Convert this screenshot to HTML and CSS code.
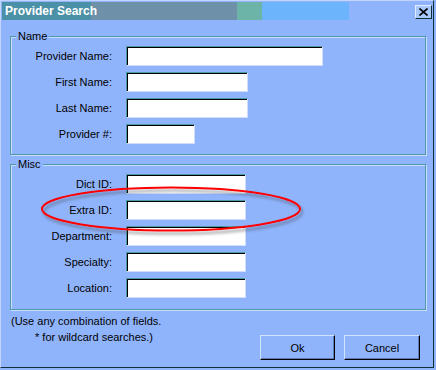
FILE: index.html
```html
<!DOCTYPE html>
<html lang="en">
<head>
    <meta charset="UTF-8">
    <title>Provider Search</title>
    <link rel="stylesheet" href="styles.css">
</head>
<body>
    <div class="dialog">
        <div class="titlebar">
            <div class="title-band">
                <span class="title-text">Provider Search</span>
                <span class="seg seg-gray"></span>
                <span class="seg seg-green"></span>
                <span class="seg seg-blue"></span>
            </div>
            <button type="button" class="close-btn">
                <svg width="9" height="8" viewBox="0 0 9 8">
                    <path d="M0.5 0.5 L8.5 7.5 M8.5 0.5 L0.5 7.5" stroke="#000" stroke-width="1.6" fill="none"/>
                </svg>
            </button>
        </div>
        <div class="content">
            <div class="group group-name">
                <span class="legend">Name</span>
                <div class="form-grid">
                    <label>Provider Name:</label>
                    <input type="text" class="field w-wide">
                    <label>First Name:</label>
                    <input type="text" class="field w-mid">
                    <label>Last Name:</label>
                    <input type="text" class="field w-mid">
                    <label>Provider #:</label>
                    <input type="text" class="field w-short">
                </div>
            </div>
            <div class="group group-misc">
                <span class="legend">Misc</span>
                <div class="form-grid">
                    <label>Dict ID:</label>
                    <input type="text" class="field w-misc">
                    <label>Extra ID:</label>
                    <input type="text" class="field w-misc">
                    <label>Department:</label>
                    <input type="text" class="field w-misc">
                    <label>Specialty:</label>
                    <input type="text" class="field w-misc">
                    <label>Location:</label>
                    <input type="text" class="field w-misc">
                </div>
            </div>
            <div class="footer">
                <div class="hint">
                    <p>(Use any combination of fields.</p>
                    <p class="indent">* for wildcard searches.)</p>
                </div>
                <div class="buttons">
                    <button type="button" class="btn btn-ok">Ok</button>
                    <button type="button" class="btn btn-cancel">Cancel</button>
                </div>
            </div>
        </div>
        <!-- red marker drawn over the Extra ID row -->
        <svg class="highlight" width="270" height="56" viewBox="0 0 270 56">
            <defs>
                <filter id="shade" x="-10%" y="-30%" width="120%" height="160%">
                    <feDropShadow dx="2" dy="3" stdDeviation="1.6" flood-color="#404850" flood-opacity="0.55"/>
                </filter>
            </defs>
            <ellipse cx="133" cy="25" rx="129" ry="21.5" fill="none" stroke="#ff0000" stroke-width="2" filter="url(#shade)"/>
        </svg>
    </div>
</body>
</html>
```

FILE: styles.css
```css
body {
    margin: 0;
    background: #90b4fc;
    font-family: "Liberation Sans", Arial, sans-serif;
    font-size: 11px;
    color: #000;
}
.dialog {
    position: relative;
    width: 434px;
    height: 368px;
    box-sizing: border-box;
    background: #90b4fc;
    border-top: 1px solid #c4d4fc;
    border-left: 1px solid #c4d4fc;
    border-right: 1px solid #10303c;
    border-bottom: 1px solid #10303c;
}
.titlebar {
    display: flex;
    justify-content: space-between;
    align-items: flex-start;
    height: 20px;
    padding: 1px 1px 0 1px;
}
.title-band {
    display: flex;
    height: 18px;
}
/* the caption runs a little past its own band, so keep it on top */
.title-text {
    position: relative;
    z-index: 1;
    width: 86px;
    padding-left: 3px;
    background: #4a90a6;
    color: #fff;
    font-weight: bold;
    font-size: 12px;
    line-height: 18px;
    white-space: nowrap;
}
.seg {
    display: block;
    height: 18px;
}
.seg-gray {
    width: 146px;
    background: #6e90a8;
}
.seg-green {
    width: 25px;
    background: #6cb4a8;
}
.seg-blue {
    width: 87px;
    background: #6cb4fc;
}
.close-btn {
    width: 17px;
    height: 14px;
    margin-top: 3px;
    padding: 0;
    display: flex;
    align-items: center;
    justify-content: center;
    background: #a8c8fc;
    border-top: 1px solid #e0ecff;
    border-left: 1px solid #e0ecff;
    border-right: 1px solid #10303c;
    border-bottom: 1px solid #10303c;
}
.content {
    padding: 14px 7px 0 9px;
}
.group {
    position: relative;
    border: 1px solid #4e98a8;
    box-shadow: inset 1px 1px 0 #c8dcfc, 1px 1px 0 #c8dcfc;
}
.group-name {
    padding: 9px 0 10px 0;
}
.group-misc {
    margin-top: 9px;
    padding: 9px 0 11px 0;
}
.legend {
    position: absolute;
    left: 5px;
    top: -7px;
    padding: 0 2px;
    line-height: 13px;
    background: #90b4fc;
}
.form-grid {
    display: grid;
    grid-template-columns: 101px 1fr;
    column-gap: 14px;
    row-gap: 6px;
    align-items: center;
}
.form-grid label {
    text-align: right;
    white-space: nowrap;
}
.field {
    justify-self: start;
    height: 20px;
    box-sizing: border-box;
    margin: 0;
    padding: 0 3px;
    background: #fff;
    border-top: 1px solid #4e98a8;
    border-left: 1px solid #4e98a8;
    border-right: 1px solid #d0dcfc;
    border-bottom: 1px solid #d0dcfc;
    box-shadow: inset 1px 1px 0 #000;
    outline: none;
}
.w-wide {
    width: 197px;
}
.w-mid {
    width: 122px;
}
.w-short {
    width: 69px;
}
.w-misc {
    width: 120px;
}
.footer {
    display: flex;
    justify-content: space-between;
    align-items: flex-start;
    padding: 3px 0 0 1px;
}
.hint p {
    margin: 0;
    line-height: 16px;
    white-space: nowrap;
}
.hint .indent {
    padding-left: 24px;
}
.buttons {
    display: flex;
    gap: 9px;
    margin-top: 22px;
    margin-right: 6px;
}
.btn {
    height: 25px;
    box-sizing: border-box;
    margin: 0;
    padding: 0;
    font-family: "Liberation Sans", Arial, sans-serif;
    font-size: 11px;
    color: #000;
    background: #90b4fc;
    border-top: 1px solid #d0e4fc;
    border-left: 1px solid #d0e4fc;
    border-right: 1px solid #000;
    border-bottom: 1px solid #000;
    box-shadow: inset -1px -1px 0 #5a7cb8;
}
.btn-ok {
    width: 75px;
}
.btn-cancel {
    width: 76px;
}
.highlight {
    position: absolute;
    left: 37px;
    top: 183px;
    pointer-events: none;
}
```
